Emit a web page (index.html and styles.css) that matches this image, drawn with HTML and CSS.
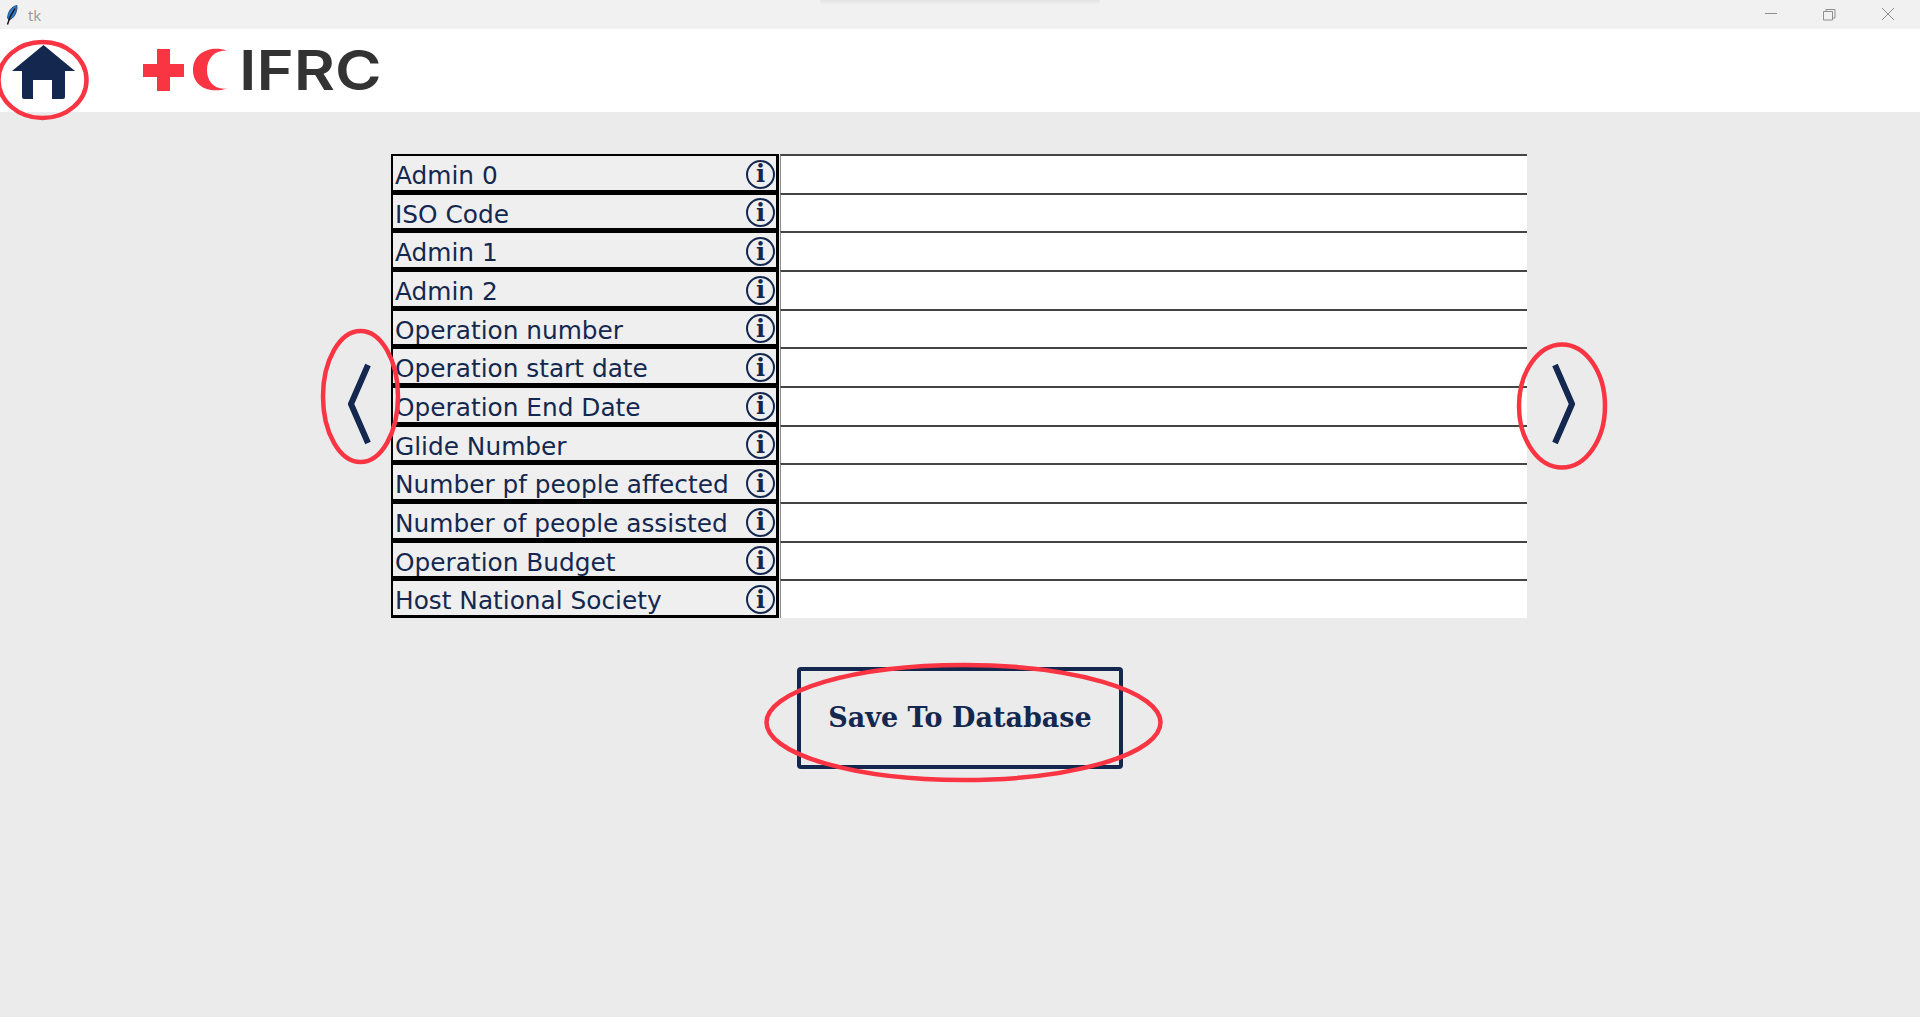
FILE: index.html
```html
<!DOCTYPE html>
<html lang="en">
<head>
<meta charset="utf-8">
<title>tk</title>
<link rel="stylesheet" href="styles.css">
</head>
<body>
<div class="app">
  <div class="titlebar">
    <svg class="feather" width="12" height="20" viewBox="0 0 12 20"><path class="feather-vane" d="M11 .5C6 1 2 6 1.500 13l1.500 2C8 13.500 11.500 7 11 .5Z"/><path class="feather-shaft" d="M9 3.500 4 12 1.500 19.500"/></svg>
    <span class="title">tk</span>
    <div class="shadow"></div>
    <div class="controls">
      <svg width="200" height="29" viewBox="0 0 200 29"><path class="ctl" d="M45 13.500H57M103.500 11.500h9v8.500h-9zM106 11.500V9.500h9v8.500h-2.500M162 8 174 20M174 8 162 20"/></svg>
    </div>
  </div>
  <header class="header">
    <svg class="home" width="64" height="56" viewBox="12 44 64 56"><path class="navy" d="M43.500 45 75 71H65V97a2 2 0 0 1-2 2H52V80H33V99H24a2 2 0 0 1-2-2V71H12Z"/></svg>
    <div class="logo">
      <svg class="emblem" width="84" height="44" viewBox="143 48 84 44"><path class="red" d="M157 49h13v15h14v13h-14v14h-13V77h-14V64h14Z"/><path class="red" d="M227 50.500C210 45 193 53 193 70S210 94 227 88.500C214 90 207 81 207 70S214 50 227 50.500Z"/></svg>
      <span class="wordmark">IFRC</span>
    </div>
  </header>
  <main class="main">
    <div class="editor">
      <button class="nav nav-prev" type="button" aria-label="Previous"><svg width="24" height="84" viewBox="0 0 24 84"><path class="chev" d="M20 3 3 42 20 81"/></svg></button>
      <div class="form">
        <div class="row"><div class="label"><span class="name">Admin 0</span><span class="info">i</span></div><input class="entry" type="text"></div>
        <div class="row"><div class="label"><span class="name">ISO Code</span><span class="info">i</span></div><input class="entry" type="text"></div>
        <div class="row"><div class="label"><span class="name">Admin 1</span><span class="info">i</span></div><input class="entry" type="text"></div>
        <div class="row"><div class="label"><span class="name">Admin 2</span><span class="info">i</span></div><input class="entry" type="text"></div>
        <div class="row"><div class="label"><span class="name">Operation number</span><span class="info">i</span></div><input class="entry" type="text"></div>
        <div class="row"><div class="label"><span class="name">Operation start date</span><span class="info">i</span></div><input class="entry" type="text"></div>
        <div class="row"><div class="label"><span class="name">Operation End Date</span><span class="info">i</span></div><input class="entry" type="text"></div>
        <div class="row"><div class="label"><span class="name">Glide Number</span><span class="info">i</span></div><input class="entry" type="text"></div>
        <div class="row"><div class="label"><span class="name">Number pf people affected</span><span class="info">i</span></div><input class="entry" type="text"></div>
        <div class="row"><div class="label"><span class="name">Number of people assisted</span><span class="info">i</span></div><input class="entry" type="text"></div>
        <div class="row"><div class="label"><span class="name">Operation Budget</span><span class="info">i</span></div><input class="entry" type="text"></div>
        <div class="row"><div class="label"><span class="name">Host National Society</span><span class="info">i</span></div><input class="entry" type="text"></div>
      </div>
      <button class="nav nav-next" type="button" aria-label="Next"><svg width="24" height="84" viewBox="0 0 24 84"><path class="chev" d="M4 3 21 42 4 81"/></svg></button>
    </div>
    <button class="save" type="button">Save To Database</button>
  </main>
  <svg class="marks" width="1920" height="1017" viewBox="0 0 1920 1017" aria-hidden="true">
    <ellipse cx="42.500" cy="80" rx="44" ry="38"/>
    <ellipse cx="360.500" cy="396.500" rx="37.500" ry="65.500"/>
    <ellipse cx="1562" cy="406" rx="43" ry="61.500"/>
    <ellipse cx="963.500" cy="722.500" rx="197" ry="57.500"/>
  </svg>
</div>
</body>
</html>
```
FILE: styles.css
```css
* { box-sizing: border-box; }
html, body { margin: 0; height: 100%; }
body { background: #ebebeb; overflow: hidden; font-family: "DejaVu Sans", sans-serif; }
.app { position: relative; width: 1920px; height: 1017px; display: flex; flex-direction: column; }

.titlebar { height: 29px; background: #f1f1f1; display: flex; align-items: center; position: relative; padding-left: 6px; }
.feather { flex: none; }
.feather-vane { fill: #2f78c4; stroke: #1d3f66; stroke-width: .8; }
.feather-shaft { fill: none; stroke: #111; stroke-width: 1.400; }
.title { margin-left: 10px; font: 15px "Open Sans", sans-serif; color: #999; }
.shadow { position: absolute; top: 0; left: 820px; width: 280px; height: 5px; background: linear-gradient(#e3e3e3, #f1f1f1); border-radius: 0 0 40px 40px; }
.controls { margin-left: auto; width: 200px; height: 29px; }
.controls svg { display: block; }
.ctl { fill: none; stroke: #8f8f8f; stroke-width: 1; }

.header { height: 83px; background: #fff; display: flex; padding: 15px 0 0 12px; }
.home { flex: none; }
.navy { fill: #14284f; }
.logo { display: flex; align-items: flex-start; margin-left: 67px; padding-top: 4px; }
.emblem { flex: none; }
.red { fill: #f93443; }
.wordmark { display: inline-block; margin-left: 12px; font: 600 55px/44px Inter, sans-serif; color: #333; transform: scaleX(1.15); transform-origin: left center; }

.main { display: flex; flex-direction: column; align-items: center; padding-top: 42px; }
.editor { display: grid; grid-template-columns: 391px 1136px 393px; width: 1920px; }
.nav { border: 0; background: none; padding: 0; margin-top: 36px; align-self: center; display: flex; }
.nav-prev { justify-self: end; margin-right: 19px; }
.nav-next { justify-self: start; margin-left: 24px; }
.chev { fill: none; stroke: #14284f; stroke-width: 6; }

.form { height: 464px; display: grid; grid-template-rows: repeat(12, 1fr); }
.row { display: grid; grid-template-columns: 388px 747px; column-gap: 1px; min-height: 0; }
.label { display: flex; align-items: center; justify-content: space-between; min-height: 0; background: #efefef; border: solid #000; border-width: 2px 3px 3px 2px; padding: 0 1px 0 2px; font-size: 24.800px; color: #14284f; white-space: nowrap; }
.name { margin-top: 5px; }
.info { width: 29px; height: 29px; margin-top: 3px; flex: none; border: 2px solid #14284f; border-radius: 50%; display: flex; align-items: center; justify-content: center; font: 700 24px/1 "DejaVu Serif", serif; color: #14284f; }
.entry { display: block; width: 100%; height: 100%; min-width: 0; margin: 0; padding: 0; background: #fff; border: 0; border-top: 2px solid #444; border-left: 1px solid #8a8a8a; border-radius: 0; outline: 0; }

.save { width: 326px; height: 102px; margin-top: 49px; background: none; border: 4px solid #14284f; border-radius: 4px; font: 700 27px "DejaVu Serif", serif; color: #14284f; padding: 0 0 1px; }

.marks { position: absolute; top: 0; left: 0; pointer-events: none; }
.marks ellipse { fill: none; stroke: #f93443; stroke-width: 4.500; }
```
